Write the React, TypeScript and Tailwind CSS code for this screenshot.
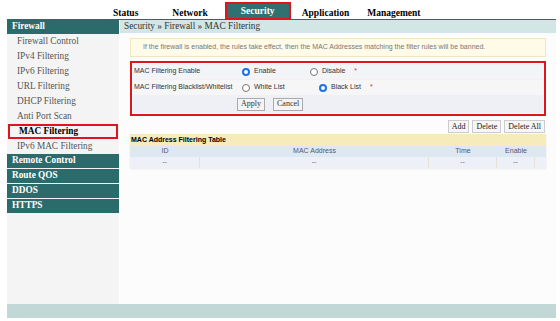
import React from 'react';

const serif = { fontFamily: '"Liberation Serif", "Times New Roman", serif' };
const sans = { fontFamily: '"Liberation Sans", Arial, sans-serif' };

const Radio = ({ checked }: { checked?: boolean }) => (
  <span
    className={
      checked
        ? 'inline-block w-[8px] h-[8px] rounded-full border-[2.5px] border-[#1a73e8] bg-white shrink-0'
        : 'inline-block w-[8px] h-[8px] rounded-full border border-[#767676] bg-white shrink-0'
    }
  />
);

const sideItems = [
  'Firewall Control',
  'IPv4 Filtering',
  'IPv6 Filtering',
  'URL Filtering',
  'DHCP Filtering',
  'Anti Port Scan',
];

const groups = ['Remote Control', 'Route QOS', 'DDOS', 'HTTPS'];

export default function App() {
  return (
    <div className="w-[560px] h-[321px] bg-white overflow-hidden">
      <div className="mx-[7px] w-[549px]">
        {/* top nav */}
        <div className="h-[20px] border-b border-[#2c6b6b] flex items-start text-[9.5px] font-bold text-black" style={serif}>
          <span className="ml-[106px] mt-[6px]">Status</span>
          <span className="ml-[34px] mt-[6px]">Network</span>
          <span className="ml-[17px] mt-[2px] w-[66px] h-[18px] border-2 border-[#e0141e] bg-[#2f7170] text-white flex items-center justify-center">
            Security
          </span>
          <span className="ml-[11px] mt-[6px]">Application</span>
          <span className="ml-[18px] mt-[6px]">Management</span>
        </div>

        <div className="flex h-[284px]">
          {/* sidebar */}
          <div className="w-[112px] bg-[#f4f4f4] flex flex-col" style={serif}>
            <div className="h-[14px] bg-[#2c6b6b] text-white font-bold text-[9.3px] pl-[5px] flex items-center">Firewall</div>
            {sideItems.map((s) => (
              <div key={s} className="h-[15px] text-[9.3px] text-[#555] pl-[10px] flex items-center">{s}</div>
            ))}
            <div className="h-[15px] mx-[1px] border-2 border-[#e0141e] text-[9.3px] font-bold text-black pl-[9px] flex items-center">
              MAC Filtering
            </div>
            <div className="h-[15px] text-[9.3px] text-[#555] pl-[10px] flex items-center">IPv6 MAC Filtering</div>
            {groups.map((g) => (
              <div key={g} className="h-[14px] mb-[1px] bg-[#2c6b6b] text-white font-bold text-[9.3px] pl-[5px] flex items-center">{g}</div>
            ))}
          </div>

          {/* main */}
          <div className="flex-1 ml-[1px] bg-[#fcfcfc]">
            <div className="h-[13px] bg-[#d3e6e6] text-[9.3px] text-[#333] pl-[4px] flex items-center" style={serif}>
              Security » Firewall » MAC Filtering
            </div>

            <div className="mx-[10px] mt-[5px] h-[19px] bg-[#fffbe8] border border-[#f1e6c2] text-[7px] text-[#777] pl-[12px] flex items-center" style={sans}>
              If the firewall is enabled, the rules take effect, then the MAC Addresses matching the filter rules will be banned.
            </div>

            <div className="mx-[10px] mt-[4px] h-[55px] border-2 border-[#e0141e] p-[1px] text-[7px] text-[#333]" style={sans}>
              <div className="h-[15px] bg-[#f3f4f8] flex items-center">
                <span className="w-[109px] pl-[1px]">MAC Filtering Enable</span>
                <span className="w-[68px] flex items-center gap-[4px]"><Radio checked />Enable</span>
                <span className="flex items-center gap-[4px]"><Radio />Disable</span>
                <span className="ml-[9px] text-[#c33]">*</span>
              </div>
              <div className="h-[16px] bg-[#f7f6f6] flex items-center border-t border-[#fbeee8]">
                <span className="w-[109px] pl-[1px]">MAC Filtering Blacklist/Whitelist</span>
                <span className="w-[77px] flex items-center gap-[4px]"><Radio />White List</span>
                <span className="flex items-center gap-[4px]"><Radio checked />Black List</span>
                <span className="ml-[9px] text-[#c33]">*</span>
              </div>
              <div className="h-[18px] bg-[#eef0f6] flex items-center pl-[104px] gap-[8px]" style={serif}>
                <span className="h-[13px] px-[3px] border border-[#aaa] bg-[#f4f4f4] text-[8px] flex items-center">Apply</span>
                <span className="h-[13px] px-[3px] border border-[#aaa] bg-[#f4f4f4] text-[8px] flex items-center">Cancel</span>
              </div>
            </div>

            <div className="mt-[4px] mr-[11px] flex justify-end gap-[3px] text-[8px] text-[#222]" style={serif}>
              <span className="h-[13px] px-[3px] border border-[#ccc] bg-[#f6f6f6] flex items-center">Add</span>
              <span className="h-[13px] px-[3px] border border-[#ccc] bg-[#f6f6f6] flex items-center">Delete</span>
              <span className="h-[13px] px-[3px] border border-[#ccc] bg-[#f6f6f6] flex items-center">Delete All</span>
            </div>

            <div className="mx-[10px] mt-[1px] text-[7px] shadow-[0_1px_2px_rgba(0,0,0,0.08)]" style={sans}>
              <div className="h-[12px] bg-[#f6ebbb] font-bold text-black pl-[1px] flex items-center">MAC Address Filtering Table</div>
              <div className="h-[11px] bg-[#dde8f3] text-[#557] flex items-center">
                <span className="w-[70px] text-center">ID</span>
                <span className="w-[229px] text-center">MAC Address</span>
                <span className="w-[68px] text-center">Time</span>
                <span className="w-[38px] text-center">Enable</span>
              </div>
              <div className="h-[11px] bg-[#eef0f7] text-[#666] flex items-stretch">
                <span className="w-[70px] border-r border-[#e6e2d6] flex items-center justify-center">--</span>
                <span className="w-[229px] border-r border-[#e6e2d6] flex items-center justify-center">--</span>
                <span className="w-[68px] border-r border-[#e6e2d6] flex items-center justify-center">--</span>
                <span className="w-[38px] border-r border-[#e6e2d6] flex items-center justify-center">--</span>
                <span className="flex-1" />
              </div>
            </div>
          </div>
        </div>

        <div className="h-[14px] bg-[#c2d8d6]" />
      </div>
    </div>
  );
}
